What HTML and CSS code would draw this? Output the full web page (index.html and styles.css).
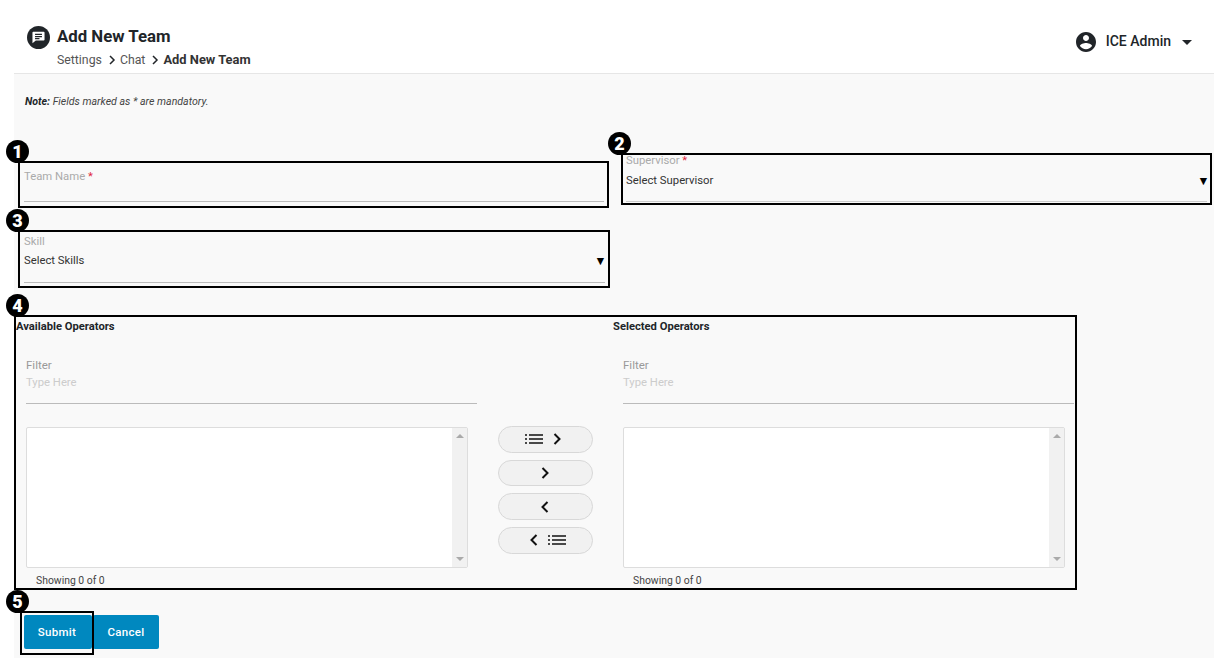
FILE: index.html
```html
<!DOCTYPE html>
<html lang="en">
<head>
<meta charset="utf-8">
<title>Add New Team</title>
<link rel="stylesheet" href="styles.css">
</head>
<body>
<div class="page">
  <header class="header">
    <div class="title-block">
      <svg class="chat-icon" viewBox="0 0 24 24"><circle cx="12" cy="12" r="12" fill="#212529"/><path d="M6.600 6h10.800c.5 0 .9.4.9.9v7.400c0 .5-.4.9-.9.9H9.200l-3.500 2.800V6.900c0-.5.4-.9.9-.9z" fill="#fff"/><path d="M8.400 8.800h7.200M8.400 11h7.200M8.400 13.100h4.600" stroke="#212529" stroke-width="1.300" fill="none"/></svg>
      <div class="titles">
        <h1 class="title">Add New Team</h1>
        <nav class="crumbs"><span>Settings</span><svg class="crumb-sep" viewBox="0 0 8 10"><path d="M2 1l4 4-4 4" fill="none" stroke="#212529" stroke-width="1.500"/></svg><span>Chat</span><svg class="crumb-sep" viewBox="0 0 8 10"><path d="M2 1l4 4-4 4" fill="none" stroke="#212529" stroke-width="1.500"/></svg><strong>Add New Team</strong></nav>
      </div>
    </div>
    <div class="user">
      <svg class="user-icon" viewBox="0 0 24 24"><path d="M12 2C6.480 2 2 6.480 2 12s4.480 10 10 10 10-4.480 10-10S17.520 2 12 2zm0 3c1.660 0 3 1.340 3 3s-1.340 3-3 3-3-1.340-3-3 1.340-3 3-3zm0 14.200c-2.500 0-4.710-1.280-6-3.220.03-1.990 4-3.080 6-3.080 1.990 0 5.970 1.090 6 3.080-1.290 1.940-3.500 3.220-6 3.220z" fill="#212529"/></svg>
      <span class="user-name">ICE Admin</span>
      <span class="caret"></span>
    </div>
  </header>

  <main class="main">
    <p class="note"><b>Note:</b> Fields marked as * are mandatory.</p>

    <div class="row-top">
      <div class="mark mark-team">
        <span class="badge badge-a">1</span>
        <div class="field field-team">
          <label class="label label-team">Team Name <em>*</em></label>
        </div>
      </div>
      <div class="mark mark-sup">
        <span class="badge badge-b">2</span>
        <div class="field field-sup">
          <label class="label">Supervisor <em>*</em></label>
          <div class="select"><span>Select Supervisor</span><i class="tri">▼</i></div>
        </div>
      </div>
    </div>

    <div class="mark mark-skill">
      <span class="badge badge-a">3</span>
      <div class="field field-skill">
        <label class="label">Skill</label>
        <div class="select"><span>Select Skills</span><i class="tri">▼</i></div>
      </div>
    </div>

    <div class="mark mark-ops">
      <span class="badge badge-ops">4</span>
      <section class="panel">
        <h2 class="panel-title">Available Operators</h2>
        <div class="filter">
          <div class="filter-label">Filter</div>
          <div class="filter-input">Type Here</div>
        </div>
        <div class="listbox"><div class="scroll"><span class="up"></span><span class="down"></span></div></div>
        <div class="count">Showing 0 of 0</div>
      </section>
      <div class="moves">
        <button class="move move-all-right" type="button">
          <svg class="i-list" viewBox="0 0 18 10"><path d="M0 1h2M4 1h14M0 5h2M4 5h14M0 9h2M4 9h14" stroke="#111" stroke-width="1.500"/></svg>
          <svg class="i-chev" viewBox="0 0 8 12"><path d="M1.500 1l5 5-5 5" fill="none" stroke="#111" stroke-width="2"/></svg>
        </button>
        <button class="move move-one" type="button">
          <svg class="i-chev" viewBox="0 0 8 12"><path d="M1.500 1l5 5-5 5" fill="none" stroke="#111" stroke-width="2"/></svg>
        </button>
        <button class="move move-one" type="button">
          <svg class="i-chev" viewBox="0 0 8 12"><path d="M6.500 1l-5 5 5 5" fill="none" stroke="#111" stroke-width="2"/></svg>
        </button>
        <button class="move move-all-left" type="button">
          <svg class="i-chev" viewBox="0 0 8 12"><path d="M6.500 1l-5 5 5 5" fill="none" stroke="#111" stroke-width="2"/></svg>
          <svg class="i-list" viewBox="0 0 18 10"><path d="M0 1h2M4 1h14M0 5h2M4 5h14M0 9h2M4 9h14" stroke="#111" stroke-width="1.500"/></svg>
        </button>
      </div>
      <section class="panel panel-right">
        <h2 class="panel-title">Selected Operators</h2>
        <div class="filter">
          <div class="filter-label">Filter</div>
          <div class="filter-input">Type Here</div>
        </div>
        <div class="listbox"><div class="scroll"><span class="up"></span><span class="down"></span></div></div>
        <div class="count">Showing 0 of 0</div>
      </section>
    </div>

    <div class="actions">
      <div class="mark mark-submit">
        <span class="badge badge-submit">5</span>
        <button class="btn btn-submit" type="button">Submit</button>
      </div>
      <button class="btn btn-cancel" type="button">Cancel</button>
    </div>
  </main>
</div>
</body>
</html>
```
FILE: styles.css
```css
* { box-sizing: border-box; }
html, body { margin: 0; padding: 0; background: #fff; }
body { font-family: Roboto, "Liberation Sans", sans-serif; color: #212529; width: 1214px; height: 665px; overflow: hidden; }
.page { padding-left: 14px; }

.header { height: 74px; display: flex; justify-content: space-between; align-items: flex-start; border-bottom: 1px solid #e6e6e6; background: #fff; }
.title-block { display: flex; align-items: flex-start; padding: 26px 0 0 13px; }
.chat-icon { width: 23px; height: 23px; margin-right: 7px; flex: none; }
.titles { display: flex; flex-direction: column; }
.title { margin: 0; font-size: 16.800px; line-height: 21px; font-weight: 700; color: #212529; }
.crumbs { display: flex; align-items: center; margin-top: 5px; font-size: 12.300px; line-height: 16px; color: #555; }
.crumbs strong { font-weight: 700; color: #333; font-size: 12.900px; }
.crumb-sep { width: 8px; height: 10px; margin: 0 4px 0 6px; }
.user { display: flex; align-items: center; padding: 30px 22px 0 0; }
.user-icon { width: 24px; height: 24px; margin-right: 8px; }
.user-name { font-size: 14px; font-weight: 500; color: #212529; margin-right: 11px; position: relative; top: -1px; }
.caret { width: 0; height: 0; border-left: 5.500px solid transparent; border-right: 5.500px solid transparent; border-top: 5.500px solid #212529; }

.main { background: #f9f9f9; height: 584px; position: relative; }
.note { margin: 0; padding: 22px 0 0 11px; height: 79px; font-size: 10.600px; line-height: 12px; font-style: italic; color: #444; }
.note b { color: #212529; }

.mark { border: 2px solid #000; position: relative; }
.badge { position: absolute; top: -23px; width: 23px; height: 23px; border-radius: 50%; background: #000; color: #fff; font: 900 18px/23px Roboto, sans-serif; text-align: center; }
.badge-a { left: -14px; }
.badge-b { left: -15px; }
.badge-ops { left: -10px; }
.badge-submit { left: -16px; }

.row-top { display: flex; align-items: flex-start; }
.mark-team { width: 591px; height: 47px; margin: 8px 0 0 4px; }
.mark-sup { width: 591px; height: 52px; margin-left: 12px; }
.mark-skill { width: 592px; height: 58px; margin: 22px 0 0 4px; }
.mark-ops { width: 1063px; height: 275px; margin-top: 27px; display: flex; }

.field { position: relative; height: 100%; padding: 0 4px; }
.field::after { content: ""; position: absolute; left: 4px; right: 3px; bottom: 3px; border-bottom: 1px solid #bbb; }
.label { display: block; font-size: 11.300px; line-height: 10px; color: #aaa; }
.label em { color: #e0263c; font-style: normal; }
.label-team { line-height: 14px; padding-top: 7px; }
.field-team::after { bottom: 4px; }
.field-sup { padding: 1px 3px 0; }
.field-sup::after { left: 3px; bottom: 1px; border-bottom-color: #ccc; }
.field-skill { padding-top: 5px; }
.select { display: flex; justify-content: space-between; align-items: center; margin-top: 7px; font-size: 11.300px; line-height: 14px; color: #333; height: 16px; }
.field-skill .select { margin-top: 6px; }
.tri { font-style: normal; font-size: 9.500px; color: #000; font-family: "DejaVu Sans", sans-serif; }

.panel { width: 461px; padding-top: 3px; flex: none; }
.panel-title { margin: 0; font-size: 11.200px; line-height: 13px; font-weight: 700; color: #212529; }
.filter { margin: 25px 0 0 10px; height: 46px; border-bottom: 1px solid #bbb; }
.filter-label { font-size: 11.500px; line-height: 14px; color: #999; }
.filter-input { margin-top: 4px; font-size: 11.300px; line-height: 14px; color: #ccc; }
.listbox { margin: 23px 9px 0 10px; height: 141px; border: 1px solid #ddd; border-radius: 2px; background: #fff; position: relative; }
.scroll { position: absolute; top: 0; right: 0; bottom: 0; width: 15px; background: #f1f1f1; }
.up, .down { position: absolute; left: 4px; width: 0; height: 0; border-left: 4px solid transparent; border-right: 4px solid transparent; }
.up { top: 6px; border-bottom: 4px solid #aaa; }
.down { bottom: 6px; border-top: 4px solid #aaa; }
.count { margin: 7px 0 0 20px; font-size: 10.400px; line-height: 12px; color: #444; }

.moves { width: 95px; margin: 109px 0 0 21px; flex: none; display: flex; flex-direction: column; gap: 7.200px; }
.move { height: 26.500px; border: 1px solid #d8d8d8; border-radius: 14px; background: #f1f1f1; display: flex; justify-content: center; align-items: center; gap: 10px; padding: 0; }
.move-all-right { padding-right: 5px; }
.move-all-left { padding-left: 4px; }
.move-one { padding-right: 2px; }
.i-list { width: 18px; height: 10px; }
.i-chev { width: 8px; height: 12px; }
.panel-right { margin-left: 20px; }

.actions { display: flex; align-items: flex-start; margin-top: 21px; padding-left: 6px; }
.mark-submit { padding: 2px 0 4px 2px; display: flex; }
.btn { width: 68px; height: 34px; border: 0; border-radius: 2px; background: #0088bf; color: #fff; font: 500 11.500px/34px Roboto, sans-serif; letter-spacing: .3px; padding: 0; }
.btn-submit { padding-right: 2px; }
.btn-cancel { width: 66px; margin: 4px 0 0 -1px; }
```
